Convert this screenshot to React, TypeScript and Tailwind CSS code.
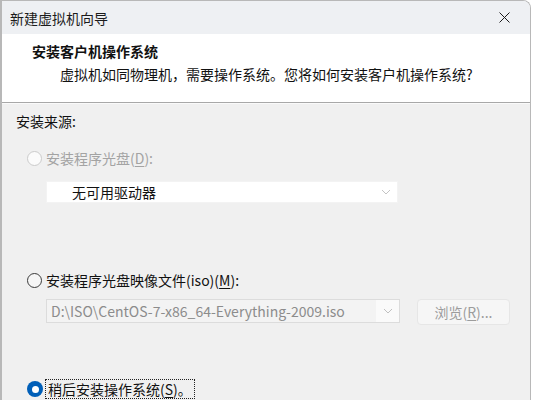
import React from "react";

const font = { fontFamily: '"Noto Sans CJK SC", "Noto Sans", sans-serif' };

function Chevron({ color = "#b4b4b4" }: { color?: string }) {
  return (
    <svg width="10" height="6" viewBox="0 0 10 6" fill="none">
      <path d="M1 1 L5 5 L9 1" stroke={color} strokeWidth="1" />
    </svg>
  );
}

export default function App() {
  return (
    <div className="w-[533px] h-[400px] bg-white overflow-hidden" style={font}>
      <div className="w-[531px] h-[400px] flex flex-col border-l-2 border-r border-t border-[#b8b8b8] rounded-tr-[8px] overflow-hidden">
        {/* Title bar */}
        <div className="h-[33px] shrink-0 bg-[#eef0f3] flex items-center justify-between pl-[8px] pr-[20px]">
          <span className="text-[14px] leading-[20px] text-[#1b1b1b]">新建虚拟机向导</span>
          <svg width="11" height="11" viewBox="0 0 11 11">
            <path d="M0.5 0.5 L10.5 10.5 M10.5 0.5 L0.5 10.5" stroke="#1b1b1b" strokeWidth="1" />
          </svg>
        </div>
        {/* Header */}
        <div className="h-[68px] shrink-0 bg-white flex flex-col pt-[7px]">
          <div className="ml-[30px] text-[14px] leading-[20px] font-bold text-[#111]">安装客户机操作系统</div>
          <div className="ml-[58px] mt-[3px] text-[14px] leading-[20px] text-[#111]">
            虚拟机如同物理机，需要操作系统。您将如何安装客户机操作系统?
          </div>
        </div>
        <div className="h-px shrink-0 bg-[#a8a8a8]" />
        <div className="h-px shrink-0 bg-[#fafafa]" />
        {/* Body */}
        <div className="flex-1 bg-[#f0f0f0] flex flex-col pt-[7px] text-[14px] leading-[20px]">
          <div className="ml-[14px] text-[#111]">安装来源:</div>

          {/* Radio 1 disabled */}
          <div className="mt-[17px] ml-[25px] flex items-center h-[20px]">
            <span className="w-[15px] h-[15px] rounded-full border border-[#cbcbcb] bg-[#fbfbfb]" />
            <span className="ml-[4px] text-[#a3a3a3]">
              安装程序光盘(<span className="underline underline-offset-2">D</span>):
            </span>
          </div>
          <div className="mt-[13px] ml-[44px] w-[352px] h-[22px] bg-white border border-[#f3f3f3] flex items-center justify-between pr-[6px]">
            <span className="ml-[25px] text-[#111]">无可用驱动器</span>
            <Chevron color="#c4c4c4" />
          </div>

          {/* Radio 2 */}
          <div className="mt-[67px] ml-[25px] flex items-center h-[20px]">
            <span className="w-[15px] h-[15px] rounded-full border border-[#3a3a3a] bg-[#f6f6f6]" />
            <span className="ml-[4px] text-[#111]">
              安装程序光盘映像文件(iso)(<span className="underline underline-offset-2">M</span>):
            </span>
          </div>
          <div className="mt-[9px] ml-[44px] flex items-start">
            <div className="w-[354px] h-[24px] border border-[#dcdcdc] bg-[#f3f3f3] flex">
              <div className="flex-1 flex items-center pl-[4px] text-[#8c8c8c]">
                D:\ISO\CentOS-7-x86_64-Everything-2009.iso
              </div>
              <div className="w-[23px] bg-[#fafafa] flex items-center justify-center">
                <Chevron color="#c0c0c0" />
              </div>
            </div>
            <div className="ml-[17px] w-[93px] h-[26px] rounded-[4px] border border-[#e6e6e6] bg-[#f6f6f6] flex items-center justify-center text-[#9c9c9c]">
              浏览(<span className="underline underline-offset-2">R</span>)...
            </div>
          </div>

          {/* Radio 3 selected */}
          <div className="mt-[54px] ml-[25px] flex items-center h-[20px]">
            <span className="w-[16px] h-[16px] rounded-full bg-[#005fb8] flex items-center justify-center">
              <span className="w-[7px] h-[7px] rounded-full bg-white" />
            </span>
            <span className="ml-[2px] px-[2px] border border-dotted border-[#222] text-[#111] leading-[18px]">
              稍后安装操作系统(<span className="underline underline-offset-2">S</span>)。
            </span>
          </div>
        </div>
      </div>
    </div>
  );
}
